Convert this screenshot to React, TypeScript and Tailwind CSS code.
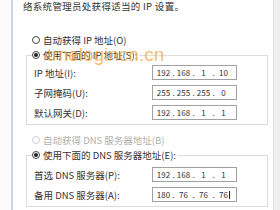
import type { ReactNode } from "react";

const ipRows1 = [
  { label: "IP 地址(I):", value: ["192", "168", "1", "10"] },
  { label: "子网掩码(U):", value: ["255", "255", "255", "0"] },
  { label: "默认网关(D):", value: ["192", "168", "1", "1"] },
];

const ipRows2 = [
  { label: "首选 DNS 服务器(P):", value: ["192", "168", "1", "1"] },
  { label: "备用 DNS 服务器(A):", value: ["180", "76", "76", "76"], caret: true },
];

function Radio({ checked, disabled, children }: { checked?: boolean; disabled?: boolean; children: ReactNode }) {
  return (
    <div className={`flex items-center gap-[3px] h-[10px] ${disabled ? "text-[#b0b0b0]" : "text-[#333]"}`}>
      <div
        className={`w-[8px] h-[8px] rounded-full border bg-white flex items-center justify-center ${
          disabled ? "border-[#cfcfcf]" : "border-[#444]"
        }`}
      >
        {checked && <div className="w-[4px] h-[4px] rounded-full bg-[#222]" />}
      </div>
      <span className="whitespace-nowrap">{children}</span>
    </div>
  );
}

function IpBox({ value, caret }: { value: string[]; caret?: boolean }) {
  return (
    <div className="w-[85px] h-[15px] border border-[#a0a0a0] bg-white flex items-center pl-[3px] text-[8px] text-[#333]">
      {value.map((v, i) => (
        <div key={i} className="flex items-center">
          {i > 0 && <span className="w-[5px] text-center">.</span>}
          <span className="w-[15px] text-center relative">
            {v}
            {caret && i === 3 && <span className="absolute right-[1px] top-[1px] w-px h-[8px] bg-[#222]" />}
          </span>
        </div>
      ))}
    </div>
  );
}

function Row({ label, value, caret }: { label: string; value: string[]; caret?: boolean }) {
  return (
    <div className="flex items-center h-[15px]">
      <span className="w-[125px] pl-[7px] whitespace-nowrap text-[#333]">{label}</span>
      <IpBox value={value} caret={caret} />
    </div>
  );
}

export default function App() {
  return (
    <div className="w-[280px] h-[210px] overflow-hidden bg-white flex font-['Noto_Sans_CJK_SC',sans-serif] text-[9.5px] leading-[10px]">
      <div className="w-[11px] bg-[#fbfbfb]" />
      <div className="w-[2px] bg-[#c8d5e2]" />
      <div className="flex-1 relative flex flex-col">
        <p className="pt-[1px] pl-[10px] whitespace-nowrap text-[#333] tracking-[0.3px]">络系统管理员处获得适当的 IP 设置。</p>

        <div className="mt-[24px] pl-[19px]">
          <Radio>自动获得 IP 地址(O)</Radio>
        </div>

        <fieldset className="mt-[5px] ml-[13px] mr-[5px] border border-[#dcdcdc] pb-[4px]">
          <legend className="ml-[5px] pr-[2px]">
            <Radio checked>使用下面的 IP 地址(S):</Radio>
          </legend>
          <div className="pt-[5px] flex flex-col gap-[5px]">
            {ipRows1.map((r) => (
              <Row key={r.label} label={r.label} value={r.value} />
            ))}
          </div>
        </fieldset>

        <div className="mt-[10px] pl-[19px]">
          <Radio disabled>自动获得 DNS 服务器地址(B)</Radio>
        </div>

        <fieldset className="mt-[5px] ml-[13px] mr-[5px] border border-[#dcdcdc] pb-[4px]">
          <legend className="ml-[5px] pr-[2px]">
            <Radio checked>使用下面的 DNS 服务器地址(E):</Radio>
          </legend>
          <div className="pt-[7px] flex flex-col gap-[5px]">
            {ipRows2.map((r) => (
              <Row key={r.label} label={r.label} value={r.value} caret={r.caret} />
            ))}
          </div>
        </fieldset>

        {/* watermark */}
        <span className="absolute left-[34px] top-[45px] text-[19px] leading-none text-[#f3a640]/75 font-['Liberation_Sans',sans-serif] whitespace-nowrap">
          tmelogincn.cn
        </span>
      </div>
      <div className="w-[7px] bg-[#efefef] border-l border-[#e2e2e2]" />
    </div>
  );
}
